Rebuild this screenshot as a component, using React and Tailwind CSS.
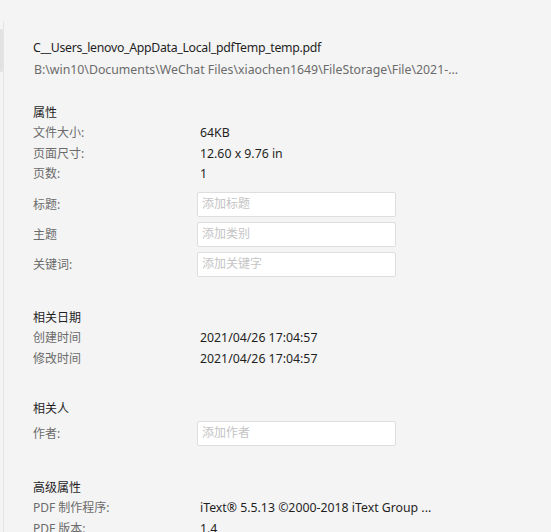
import React from "react";

const font = { fontFamily: '"Noto Sans", "Noto Sans CJK SC", sans-serif' };

function Heading({ children, className = "" }) {
  return (
    <div className={"h-5 pt-[2px] flex items-center text-[12px] text-[#1f1f1f] " + className}>{children}</div>
  );
}

function Row({ label, value }) {
  return (
    <div className="h-[20.5px] pt-[2px] flex items-center">
      <div className="w-[167px] text-[12px] text-[#6b6b6b]">{label}</div>
      <div className="text-[12.3px] text-[#1f1f1f]">{value}</div>
    </div>
  );
}

function InputRow({ label, placeholder }) {
  return (
    <div className="h-[25px] flex items-center text-[12px]">
      <div className="w-[164px] pt-[2px] text-[#6b6b6b]">{label}</div>
      <div className="w-[199px] h-[25px] bg-white border border-[#dedede] rounded-[2px] flex items-center pl-[4px] text-[#c4c4c4]">
        {placeholder}
      </div>
    </div>
  );
}

export default function App() {
  return (
    <div className="w-[551px] h-[532px] bg-[#f4f4f4] overflow-hidden flex items-start" style={font}>
      <div className="w-[3px] pt-[29px] shrink-0">
        <div className="h-[43px] bg-[#e2e2e2] rounded-r-[2px]" />
      </div>
      <div className="mt-[21px] flex-1 min-h-[600px] border-l border-[#e4e4e4] pl-[29px] pt-[16px]">
        <div className="h-[22px] flex items-center text-[12.3px] tracking-[-0.3px] text-[#1f1f1f]">
          C__Users_lenovo_AppData_Local_pdfTemp_temp.pdf
        </div>
        <div className="h-[22px] flex items-center text-[12.3px] text-[#6b6b6b] ml-[1px]">
          B:\win10\Documents\WeChat Files\xiaochen1649\FileStorage\File\2021-...
        </div>

        <Heading className="mt-[21px]">属性</Heading>
        <Row label="文件大小:" value="64KB" />
        <Row label="页面尺寸:" value="12.60 x 9.76 in" />
        <Row label="页数:" value="1" />
        <div className="mt-[8px] flex flex-col gap-[5px]">
          <InputRow label="标题:" placeholder="添加标题" />
          <InputRow label="主题" placeholder="添加类别" />
          <InputRow label="关键词:" placeholder="添加关键字" />
        </div>

        <Heading className="mt-[30.5px]">相关日期</Heading>
        <Row label="创建时间" value="2021/04/26 17:04:57" />
        <Row label="修改时间" value="2021/04/26 17:04:57" />

        <Heading className="mt-[30px]">相关人</Heading>
        <div className="mt-[2.5px]">
          <InputRow label="作者:" placeholder="添加作者" />
        </div>

        <Heading className="mt-[31.5px]">高级属性</Heading>
        <Row label="PDF 制作程序:" value="iText® 5.5.13 ©2000-2018 iText Group ..." />
        <Row label="PDF 版本:" value="1.4" />
      </div>
    </div>
  );
}
